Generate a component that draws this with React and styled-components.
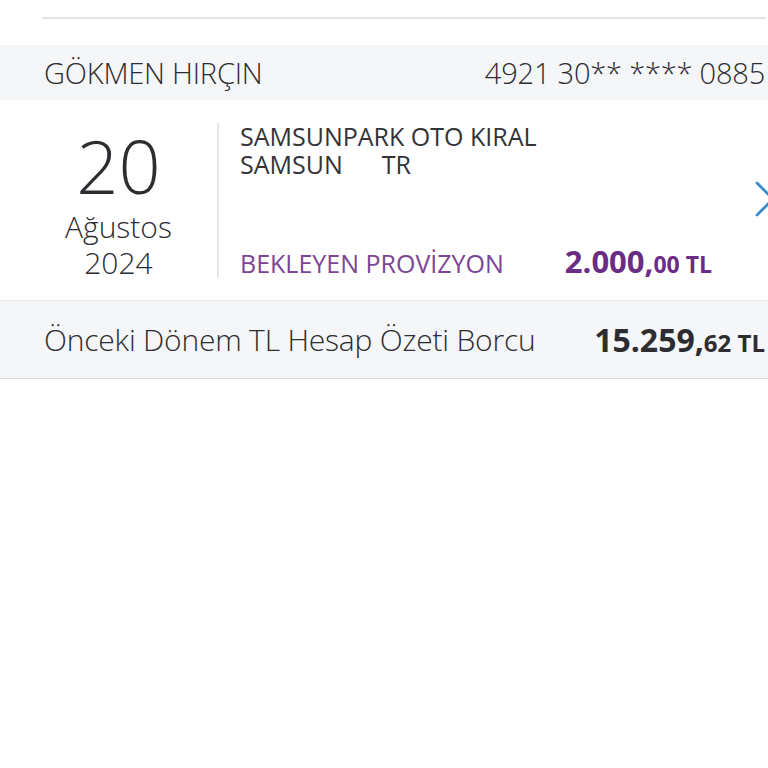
import React from "react";
import styled, { createGlobalStyle } from "styled-components";

const GlobalStyle = createGlobalStyle`
    body {
        margin: 0;
        background: #fff;
        font-family: "Open Sans", "Noto Sans", sans-serif;
        color: #2c2c31;
    }
`;

const Page = styled.div`
    padding-top: 17px;
    overflow: hidden;
`;

const TopRule = styled.div`
    height: 2px;
    margin-left: 42px;
    margin-right: 2px;
    background: #e3e4e7;
`;

const HeaderBar = styled.div`
    margin-top: 26px;
    height: 55px;
    background: #f5f6f8;
    display: flex;
    align-items: center;
    justify-content: space-between;
    padding: 0 3px 0 44px;
    font-size: 29px;
    font-weight: 300;
    letter-spacing: -0.2px;
    white-space: nowrap;
`;

const TransactionRow = styled.div`
    height: 200px;
    display: flex;
    align-items: stretch;
`;

const DateCol = styled.div`
    width: 197px;
    padding-left: 20px;
    display: flex;
    flex-direction: column;
    align-items: center;
    padding-top: 26px;
`;

const Day = styled.div`
    font-size: 74px;
    font-weight: 300;
    line-height: 80px;
    margin-bottom: 3px;
`;

const DateLine = styled.div`
    font-size: 30px;
    font-weight: 300;
    line-height: 36px;
`;

const Divider = styled.div`
    width: 2px;
    margin: 23px 0 22px;
    background: #e4e9ef;
`;

const Details = styled.div`
    flex: 1;
    padding: 22px 0 18px 21px;
    display: flex;
    flex-direction: column;
    justify-content: space-between;
`;

const Merchant = styled.div`
    font-size: 25px;
    line-height: 28px;
    font-weight: 400;
    white-space: pre;
    color: #333338;
`;

const StatusRow = styled.div`
    display: flex;
    align-items: baseline;
    width: 472px;
    justify-content: space-between;
    white-space: nowrap;
`;

const Status = styled.span`
    font-size: 25px;
    color: #7d4595;
`;

const Amount = styled.span`
    font-weight: 700;
    white-space: nowrap;
    color: ${(p) => p.$color || "#6a2c84"};
    font-size: ${(p) => p.$size || 31}px;
`;

const Cents = styled.span`
    font-size: ${(p) => p.$size || 23}px;
`;

const ChevronWrap = styled.div`
    width: 13px;
    overflow: hidden;
    display: flex;
    align-items: center;
    padding-bottom: 2px;
`;

const SummaryBar = styled.div`
    height: 77px;
    border-top: 1px solid #e8e8ec;
    border-bottom: 1px solid #dddce4;
    background: #f5f6f8;
    display: flex;
    align-items: center;
    justify-content: space-between;
    padding: 0 3px 0 44px;
    white-space: nowrap;
`;

const SummaryLabel = styled.span`
    font-size: 30px;
    font-weight: 300;
    letter-spacing: -0.2px;
`;

const App = () => {
    return (
        <>
            <GlobalStyle />
            <Page>
                <TopRule />
                <HeaderBar>
                    <span>GÖKMEN HIRÇIN</span>
                    <span>4921 30** **** 0885</span>
                </HeaderBar>
                <TransactionRow>
                    <DateCol>
                        <Day>20</Day>
                        <DateLine>Ağustos</DateLine>
                        <DateLine>2024</DateLine>
                    </DateCol>
                    <Divider />
                    <Details>
                        <Merchant>
                            {"SAMSUNPARK OTO KIRAL\nSAMSUN      TR"}
                        </Merchant>
                        <StatusRow>
                            <Status>BEKLEYEN PROVİZYON</Status>
                            <Amount>
                                2.000,<Cents>00 TL</Cents>
                            </Amount>
                        </StatusRow>
                    </Details>
                    <ChevronWrap>
                        <svg width="22" height="36" viewBox="0 0 22 36" style={{ flexShrink: 0 }}>
                            <path d="M2 2 L18 18 L2 34" fill="none" stroke="#3a8ccf" strokeWidth="2.8" strokeLinecap="round" />
                        </svg>
                    </ChevronWrap>
                </TransactionRow>
                <SummaryBar>
                    <SummaryLabel>Önceki Dönem TL Hesap Özeti Borcu</SummaryLabel>
                    <Amount $color="#2c2c31" $size={32}>
                        15.259,<Cents $size={24}>62 TL</Cents>
                    </Amount>
                </SummaryBar>
            </Page>
        </>
    );
};

export default App;
